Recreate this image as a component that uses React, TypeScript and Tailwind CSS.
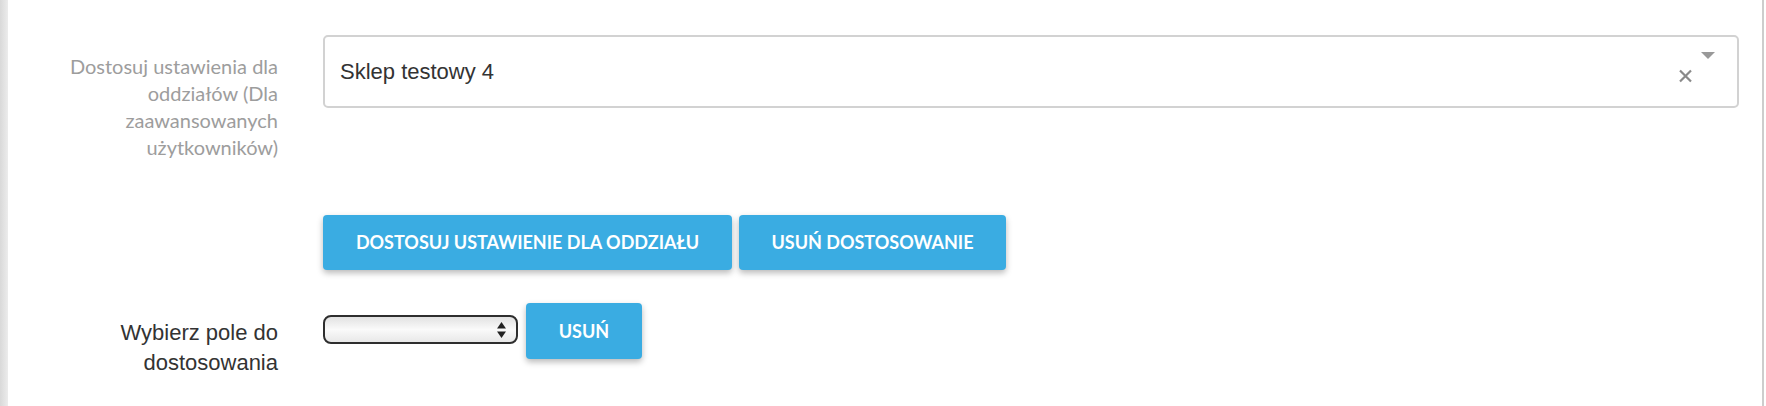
function SelectArrows() {
  return (
    <svg width="11" height="18" viewBox="0 0 11 18" className="shrink-0">
      <path d="M5.5 1 L10 7.5 L1 7.5 Z" fill="#222" />
      <path d="M5.5 17 L10 10.5 L1 10.5 Z" fill="#222" />
    </svg>
  );
}

function ActionButton({ label, width }: { label: string; width: string }) {
  return (
    <button
      className={`${width} h-[55px] rounded-[4px] bg-[#3aace2] text-white font-bold uppercase text-[18px] shadow-[0_3px_6px_rgba(0,0,0,0.28)] flex items-center justify-center`}
      style={{ fontFamily: 'Lato, "Open Sans", sans-serif' }}
    >
      {label}
    </button>
  );
}

export default function App() {
  return (
    <div className="w-full h-[406px] flex bg-white overflow-hidden">
      {/* cień lewej krawędzi panelu */}
      <div className="w-[8px] h-full bg-gradient-to-r from-[#d9d9d9] to-[#ececec] shrink-0" />

      <div className="flex-1 flex flex-col pt-[35px]">
        {/* wiersz: ustawienia dla oddziałów */}
        <div className="flex items-start">
          <div
            className="w-[270px] shrink-0 text-right text-[20px] leading-[27px] text-[#9d9d9d] pt-[18px]"
            style={{ fontFamily: 'Lato, "Open Sans", sans-serif' }}
          >
            Dostosuj ustawienia dla oddziałów (Dla zaawansowanych użytkowników)
          </div>
          <div className="w-[45px] shrink-0" />
          <div className="flex-1 h-[73px] border-2 border-[#d2d2d2] rounded-[5px] flex items-center pl-[15px] relative">
            <span
              className="text-[22px] text-[#333]"
              style={{ fontFamily: '"Liberation Sans", Arial, sans-serif' }}
            >
              Sklep testowy 4
            </span>
            <span className="absolute right-[44px] top-[32px]">
              <svg width="15" height="14" viewBox="0 0 15 14">
                <path d="M2 1.5 L13 12.5 M13 1.5 L2 12.5" stroke="#8a8a8a" strokeWidth="2.2" />
              </svg>
            </span>
            <span className="absolute right-[22px] top-[15px]">
              <svg width="14" height="7" viewBox="0 0 14 7">
                <path d="M0 0 L14 0 L7 7 Z" fill="#999" />
              </svg>
            </span>
          </div>
          <div className="w-[23px] shrink-0" />
        </div>

        {/* przyciski dostosowania */}
        <div className="flex mt-[54px] pl-[315px] gap-[7px]">
          <ActionButton label="Dostosuj ustawienie dla oddziału" width="w-[409px]" />
          <ActionButton label="Usuń dostosowanie" width="w-[267px]" />
        </div>

        {/* wiersz: wybór pola */}
        <div className="flex items-start mt-[33px]">
          <div
            className="w-[270px] shrink-0 text-right text-[22px] leading-[30px] text-[#333] pt-[15px]"
            style={{ fontFamily: '"Liberation Sans", Arial, sans-serif' }}
          >
            Wybierz pole do dostosowania
          </div>
          <div className="w-[45px] shrink-0" />
          <div className="mt-[12px] w-[195px] h-[29px] rounded-[8px] border-2 border-[#2e2e2e] bg-gradient-to-b from-[#e2e2e2] via-[#fafafa] to-[#e8e8e8] flex items-center justify-end pr-[9px]">
            <SelectArrows />
          </div>
          <div className="w-[8px] shrink-0" />
          <ActionButton label="Usuń" width="w-[116px] h-[56px]" />
        </div>
      </div>

      {/* prawa krawędź */}
      <div className="w-[2px] h-full bg-[#cdcdcd] shrink-0" />
      <div className="w-[2px] h-full bg-white shrink-0" />
    </div>
  );
}
